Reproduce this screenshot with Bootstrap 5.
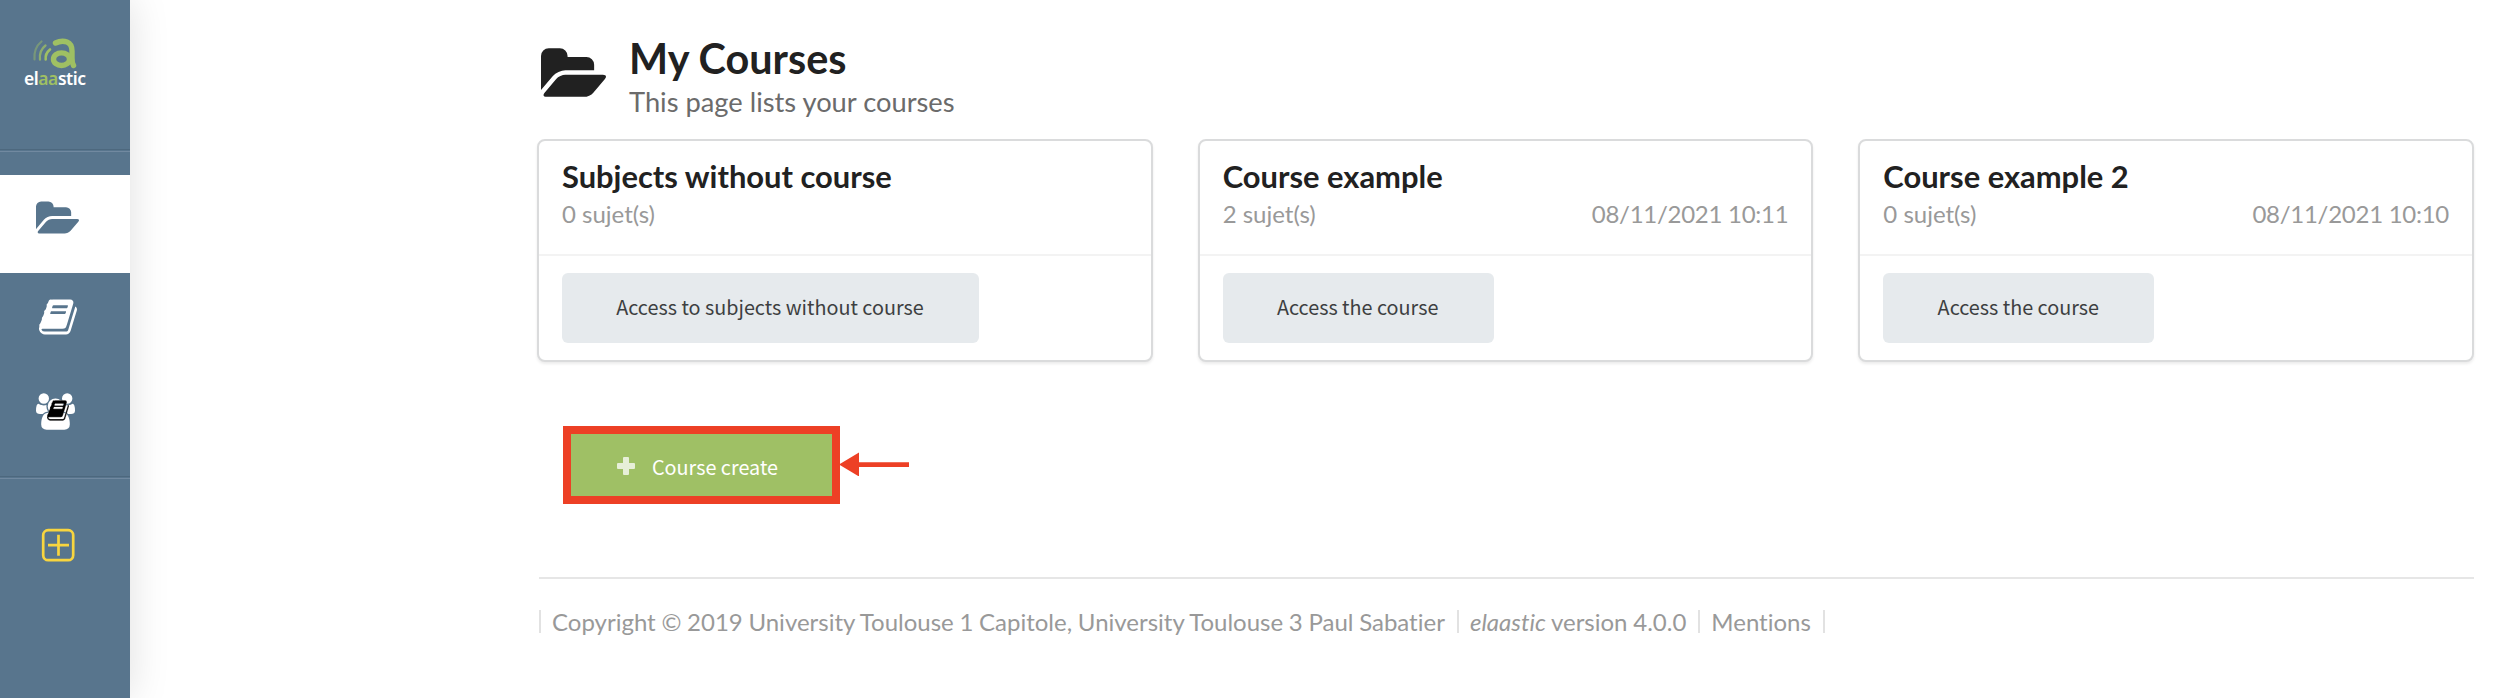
<!DOCTYPE html>
<html lang="en">
<head>
<meta charset="utf-8">
<title>My Courses</title>
<link rel="stylesheet" href="https://cdn.jsdelivr.net/npm/bootstrap@5.3.0/dist/css/bootstrap.min.css">
<style>
body{font-family:Lato,sans-serif;font-size:24px;color:#212121;height:698px;overflow:hidden;background:#fff;font-variant-ligatures:none}
svg{display:block;flex:none}
.side{width:130px;background:#58758d;box-shadow:0 0 38px rgba(0,0,0,.13);color:#fff}
.brand{height:149px;padding:38px 0 0 24px}
.brand-name{font:600 17.500px/19px "Noto Sans",sans-serif;letter-spacing:-.45px}
.leaf{color:#9fc063}
.rule{height:3px;border-top:1px solid #4d687e;border-bottom:1px solid #7189a0}
.entry{height:98px;padding-left:36px}
.entry.on{background:#fff;color:#58758d;margin-top:23px}
.page{padding:34px 44px 0 407px}
.head-icon{padding:14px 0 0 4px;width:92px}
h1{font-size:41.4px;font-weight:700;line-height:48px;margin:0}
.sub{font-size:27.3px;line-height:36px;padding-top:2px;color:#6b6b6b}
.deck{display:grid;grid-template-columns:repeat(3,1fr);gap:45px;margin-top:19px}
.deck .card{border:2px solid #dadbdc;border-radius:8px;box-shadow:0 2px 3px rgba(0,0,0,.08);height:223px}
.top{height:116px;padding:17px 23px 0 23px;border-bottom:2px solid #f3f3f3}
.top h2{font-size:30.9px;font-weight:700;line-height:38px;margin:0}
.meta{color:#999;line-height:34px;padding-top:1px}
.date{letter-spacing:-.27px}
.act{font-family:"Noto Sans CJK JP",sans-serif;font-size:19.800px;border-radius:6px;border:0;height:70px;background:#e6eaed;color:#3d3f41;padding:0 1px 2px 0}
.bottom{padding:17px 23px}
.create{width:277px;height:78px;margin:64px 0 0 26px;border:8px solid #ed4025;border-radius:0;background:#9fc065;color:#fff;font:400 19.800px "Noto Sans CJK JP",sans-serif;padding:2px 0 0 46px}
.create span{margin-left:17px}
.foot{border-top:2px solid #e6e6e6;margin:73px 0 0 2px;padding-top:31px;color:#999;line-height:23px}
.foot span{border-left:2px solid #e2e2e2;padding:0 12px 0 11px;white-space:nowrap;word-spacing:-.45px}
.foot span:last-child{border-right:2px solid #e2e2e2}
</style>
</head>
<body class="d-flex">
<svg width="0" height="0" class="position-absolute">
<symbol id="folder" viewBox="0 128 1879 1408"><path d="M1879 952q0 31-31 66l-336 396q-43 51-120.5 86.5t-143.5 35.5h-1088q-34 0-60.5-13t-26.5-43q0-31 31-66l336-396q43-51 120.5-86.5t143.5-35.5h1088q34 0 60.5 13t26.5 43zm-343-344v160h-832q-94 0-197 47.5t-164 119.5l-337 396-5 6q0-4-.5-12.5t-.5-12.5v-960q0-92 66-158t158-66h320q92 0 158 66t66 158v32h544q92 0 158 66t66 158z"/></symbol>
<symbol id="book" viewBox="64 128 1665 1536"><path d="M1703 478q40 57 18 129l-275 906q-19 64-76.5 107.5t-122.5 43.5h-923q-77 0-148.5-53.5t-99.5-131.5q-24-67-2-127 0-4 3-27t4-37q1-8-3-21.5t-3-19.5q2-11 8-21t16.5-23.5 16.5-23.5q23-38 45-91.5t30-91.5q3-10 .5-30t-.5-28q3-11 17-28t17-23q21-36 42-92t25-90q1-9-2.5-32t.5-28q4-13 22-30.5t22-22.5q19-26 42.5-84.5t27.5-96.5q1-8-3-25.5t-2-26.5q2-8 9-18t18-23 17-21q8-12 16.5-30.5t15-35 16-36 19.5-32 26.5-23.5 36-11.5 47.500 5.500l-1 3q38-9 51-9h761q74 0 114 56t18 130l-274 906q-36 119-71.5 153.5t-128.5 34.5h-869q-27 0-38 15-11 16-1 43 24 70 144 70h923q29 0 56-15.5t35-41.5l300-987q7-22 5-57 38 15 59 43zm-1064 2q-4 13 2 22.5t20 9.5h608q13 0 25.5-9.5t16.5-22.5l21-64q4-13-2-22.5t-20-9.5h-608q-13 0-25.5 9.5t-16.5 22.5zm-83 256q-4 13 2 22.5t20 9.5h608q13 0 25.5-9.5t16.5-22.5l21-64q4-13-2-22.5t-20-9.5h-608q-13 0-25.5 9.5t-16.5 22.5z"/></symbol>
<symbol id="users" viewBox="64 0 1920 1792"><path d="M657 896q-162 5-265 128h-134q-82 0-138-40.5t-56-118.5q0-353 124-353 6 0 43.5 21t97.5 42.5 119 21.5q67 0 133-23-5 37-5 66 0 159 81 256zm1071 637q0 120-73 189.5t-194 69.5h-874q-121 0-194-69.5t-73-189.5q0-53 3.5-103.5t14-109 26.5-108.5 43-97.5 62-81 85.5-53.5 111.5-20q10 0 43 21.5t73 48 107 48 135 21.5 135-21.5 107-48 73-48 43-21.5q61 0 111.5 20t85.5 53.5 62 81 43 97.5 26.5 108.5 14 109 3.5 103.5zm-1024-1277q0 106-75 181t-181 75-181-75-75-181 75-181 181-75 181 75 75 181zm704 384q0 159-112.5 271.5t-271.5 112.5-271.5-112.5-112.5-271.5 112.5-271.5 271.5-112.5 271.5 112.5 112.5 271.5zm576 225q0 78-56 118.5t-138 40.5h-134q-103-123-265-128 81-97 81-256 0-29-5-66 66 23 133 23 59 0 119-21.5t97.5-42.5 43.5-21q124 0 124 353zm-128-609q0 106-75 181t-181 75-181-75-75-181 75-181 181-75 181 75 75 181z"/></symbol>
</svg>
<nav class="side d-flex flex-column flex-shrink-0 h-100">
  <div class="brand">
    <svg width="60" height="31" fill="none" stroke="#9fc063" stroke-linecap="round">
      <path d="M10.500 21.500Q9.500 10 17.500 3.500" stroke-width="2.200" opacity=".45"/>
      <path d="M16 21.500Q15 12.500 21.500 7.500" stroke-width="2.300" opacity=".75"/>
      <path d="M21.700 21.500Q21 15.500 26 11.500" stroke-width="2.600"/>
      <path d="M31.500 5Q37.500 2 43 4Q48 6 48 13V20Q48 25 49.500 27.500" stroke-width="5.400"/>
      <ellipse cx="37.500" cy="21.200" rx="8" ry="6.300" stroke-width="5.400"/>
    </svg>
    <div class="brand-name">el<span class="leaf">aa</span>stic</div>
  </div>
  <div class="rule"></div>
  <a class="entry on d-flex align-items-center"><svg width="43" height="33" fill="currentColor" style="margin-top:-13px"><use href="#folder"/></svg></a>
  <a class="entry d-flex align-items-center"><svg width="38" height="36" fill="#fff" style="margin:-10px 0 0 3px"><use href="#book"/></svg></a>
  <a class="entry d-flex align-items-center"><svg width="39" height="37" style="margin-top:-17px"><use href="#users" width="39" height="37" fill="#fff"/><use href="#book" x="11" y="7" width="22" height="21" stroke="#fff" stroke-width="20"/></svg></a>
  <div class="rule" style="margin-top:7px"></div>
  <a class="entry pt-5"><svg width="40" height="40" fill="none" stroke="#f8d53f" stroke-width="2.700"><rect x="7.200" y="3.200" width="30" height="30" rx="5"/><path d="M12 18.200h21M22.500 7.700v21"/></svg></a>
</nav>
<main class="page flex-grow-1">
  <header class="d-flex">
    <div class="head-icon"><svg width="65" height="49" fill="#212121"><use href="#folder"/></svg></div>
    <div><h1>My Courses</h1><div class="sub">This page lists your courses</div></div>
  </header>
  <section class="deck">
    <article class="card">
      <div class="top"><h2>Subjects without course</h2><div class="meta">0 sujet(s)</div></div>
      <div class="bottom"><button class="btn act" style="width:417px">Access to subjects without course</button></div>
    </article>
    <article class="card">
      <div class="top"><h2>Course example</h2><div class="meta d-flex justify-content-between"><span>2 sujet(s)</span><span class="date">08/11/2021 10:11</span></div></div>
      <div class="bottom"><button class="btn act" style="width:271px">Access the course</button></div>
    </article>
    <article class="card">
      <div class="top"><h2>Course example 2</h2><div class="meta d-flex justify-content-between"><span>0 sujet(s)</span><span class="date">08/11/2021 10:10</span></div></div>
      <div class="bottom"><button class="btn act" style="width:271px">Access the course</button></div>
    </article>
  </section>
  <div class="d-flex align-items-start">
    <button class="create d-flex align-items-center"><svg width="18" height="18" fill="#e7efd8"><path d="M7 0h4q1 0 1 1v5h5q1 0 1 1v4q0 1-1 1h-5v5q0 1-1 1H7q-1 0-1-1v-5H1q-1 0-1-1V7q0-1 1-1h5V1q0-1 1-1z"/></svg><span>Course create</span></button>
    <svg width="70" height="24" fill="#ed4025" style="margin:90px 0 0 -1px"><path d="M0 12.500L20 .5V10.300H70V15H20V24.500z"/></svg>
  </div>
  <footer class="foot d-flex"><span>Copyright © 2019 University Toulouse 1 Capitole, University Toulouse 3 Paul Sabatier</span><span><em>elaastic</em> version 4.0.0</span><span>Mentions</span></footer>
</main>
<script src="https://cdn.jsdelivr.net/npm/bootstrap@5.3.0/dist/js/bootstrap.bundle.min.js"></script>
</body>
</html>
